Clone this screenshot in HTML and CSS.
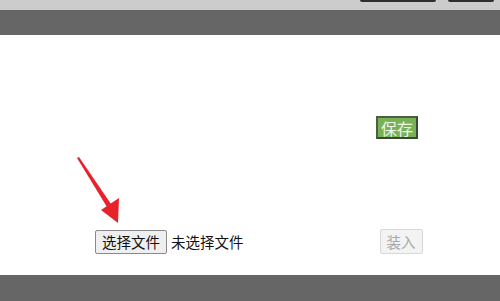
FILE: index.html
```html
<!DOCTYPE html>
<html lang="zh-CN">
<head>
    <meta charset="UTF-8">
    <title>保存 / 装入</title>
    <link rel="stylesheet" href="styles.css">
</head>
<body>
    <div class="topbar">
        <span class="top-btn wide"></span>
        <span class="top-btn"></span>
    </div>
    <div class="nav"></div>

    <div class="main">
        <div class="save-row">
            <button class="save-btn">保存</button>
        </div>
        <div class="file-row">
            <label class="file-btn">选择文件</label>
            <span class="file-name">未选择文件</span>
            <button class="load-btn" disabled>装入</button>
        </div>

        <!-- 红色箭头标注 -->
        <svg class="arrow" width="50" height="70" viewBox="0 0 50 70">
            <polygon points="3,3 5,2 37,49 33,52" fill="#e8222b"/>
            <polygon points="27,55 45,43 44,68" fill="#e8222b"/>
        </svg>
    </div>

    <div class="footer"></div>
</body>
</html>
```

FILE: styles.css
```css
* {
    margin: 0;
    padding: 0;
    box-sizing: border-box;
}

body {
    width: 500px;
    font-family: "Noto Sans CJK SC", "Liberation Sans", sans-serif;
    background: #fff;
}

.topbar {
    height: 10px;
    background: #cccccc;
    display: flex;
    justify-content: flex-end;
    gap: 12px;
    padding-right: 6px;
}

.top-btn {
    width: 46px;
    height: 2px;
    background: #2e2e2e;
    border-radius: 0 0 2px 2px;
}

.top-btn.wide {
    width: 76px;
}

.nav {
    height: 25px;
    background: #666666;
}

.main {
    position: relative;
    height: 240px;
    padding-top: 81px;
}

.save-row {
    display: flex;
    padding-left: 376px;
}

.save-btn {
    width: 42px;
    height: 23px;
    background: #78b257;
    color: #eef5e6;
    border: 2px solid #3a4a30;
    border-top-color: #4d5e42;
    border-left-color: #4d5e42;
    font-family: inherit;
    font-size: 16px;
    line-height: 18px;
}

.file-row {
    display: flex;
    align-items: center;
    margin-top: 90px;
    padding-left: 95px;
}

.file-btn {
    height: 24px;
    padding: 0 6px;
    background: #efefef;
    border: 1px solid #8a8a8a;
    border-radius: 2px;
    font-size: 14.5px;
    line-height: 22px;
    color: #111;
}

.file-name {
    margin-left: 4px;
    font-size: 14.5px;
    color: #111;
}

.load-btn {
    margin-left: 136px;
    width: 43px;
    height: 25px;
    background: #f3f3f3;
    color: #a8a8a8;
    border: 1px solid #d8d8d8;
    border-radius: 2px;
    font-family: inherit;
    font-size: 14.5px;
}

.arrow {
    position: absolute;
    left: 74px;
    top: 120px;
}

.footer {
    height: 26px;
    background: #666666;
}
```
